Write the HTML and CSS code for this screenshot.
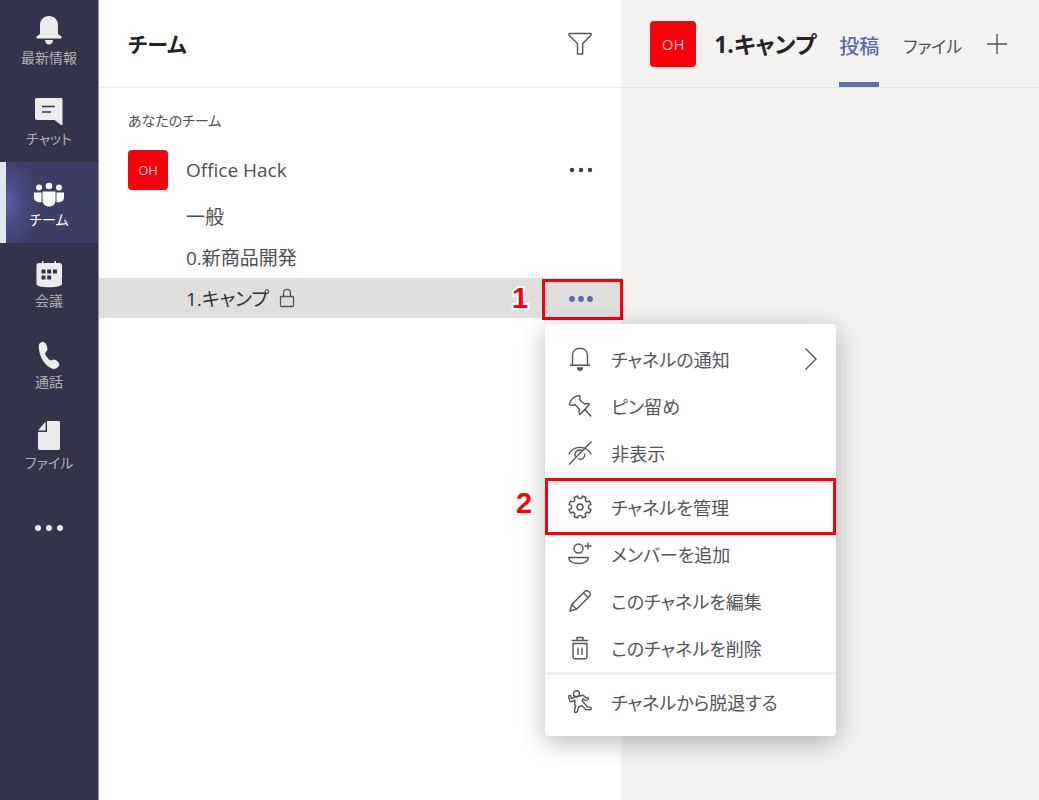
FILE: index.html
```html
<!DOCTYPE html>
<html lang="ja">
<head>
<meta charset="utf-8">
<meta name="viewport" content="width=device-width, initial-scale=1">
<title>チーム</title>
<link rel="stylesheet" href="styles.css">
</head>
<body>
<div class="app">
  <nav class="rail" aria-label="メイン">
    <a class="rail-item" href="#activity">
      <svg class="rail-icon" viewBox="0 0 30 30"><path d="M15 1c5.400 0 9 4 9 9v9l3.300 2.500c.8.700.4 2-.8 2H3.500c-1.200 0-1.600-1.300-.8-2L6 19v-9c0-5 3.600-9 9-9z"/><path d="M11 25h8c-.3 3-2 4.500-4 4.500S11.300 28 11 25z"/></svg>
      <span>最新情報</span>
    </a>
    <a class="rail-item" href="#chat">
      <svg class="rail-icon" viewBox="0 0 30 30"><path d="M3 2h24c1 0 1.500.6 1.500 1.500V28c0 1-1 1.300-1.700.8L20.500 24H3c-1 0-2-.8-2-2V4c0-1.200.8-2 2-2z"/><path class="rail-cut" d="M8 10.500h13M8 16h9"/></svg>
      <span>チャット</span>
    </a>
    <a class="rail-item rail-item-active" href="#teams" aria-current="page">
      <svg class="rail-icon" viewBox="0 -4 30 30"><circle cx="5" cy="6.500" r="3"/><circle cx="15" cy="5" r="3.300"/><circle cx="25" cy="6.500" r="3"/><path d="M8.500 10.500h13V19c0 4-2.500 6.500-6.500 6.500S8.500 23 8.500 19z"/><path d="M0 11.500h7.500v9.700C3 21.500 0 20 0 16.500zM30 11.500h-7.500v9.700c4.500.3 7.500-1.200 7.500-4.700z"/></svg>
      <span>チーム</span>
    </a>
    <a class="rail-item" href="#meetings">
      <svg class="rail-icon" viewBox="0 -2 30 30"><path d="M8 1h1.500v2h11V1H22v2h3.500C27 3 28 4 28 5.500V24c0 2-6 3.300-13 3.300S2.500 26 2.500 24V5.500C2.500 4 3.500 3 5 3h3z"/><path class="rail-hole" d="M7.500 9.500h4v4h-4zM13.200 9.500h4v4h-4zM19 9.500h4v4h-4zM7.500 15.500h4v4h-4zM13.200 15.500h4v4h-4z"/></svg>
      <span>会議</span>
    </a>
    <a class="rail-item" href="#calls">
      <svg class="rail-icon" viewBox="0 -2 30 30"><path d="M7 1.500c2.500-1 4.500-.2 5.500 2.500 1.500 4 1.300 5-.9 7.400-.8 1-.5 2 .5 3.500l2.500 3.200c1.100 1.300 2 1.500 3.200 1 3-1.200 4-.7 6.500 2.200 1.600 1.800 1 3.500-.6 5-1.900 1.900-4.200 2.200-6.500 1C10 23.500 5.500 16 4.700 6c-.1-2.500.7-3.900 2.300-4.500z"/></svg>
      <span>通話</span>
    </a>
    <a class="rail-item" href="#files">
      <svg class="rail-icon" viewBox="0 -1 30 30"><path d="M13 0h11.500c1 0 1.500.7 1.500 1.500v26c0 .9-.7 1.500-1.700 1.500H5.700c-1 0-1.700-.6-1.700-1.500V11h9z"/><path d="M11.500.8V9.500H4z"/></svg>
      <span>ファイル</span>
    </a>
    <button class="rail-more" type="button" aria-label="その他">
      <svg class="rail-icon" viewBox="0 0 30 30"><circle cx="4" cy="16" r="3"/><circle cx="15" cy="16" r="3"/><circle cx="26" cy="16" r="3"/></svg>
    </button>
  </nav>

  <section class="panel">
    <header class="panel-head">
      <h1 class="panel-title">チーム</h1>
      <button class="icon-button" type="button" aria-label="フィルター">
        <svg class="icon" viewBox="0 0 24 24"><path d="M1 1.500h22v1.800l-8.300 8.200V22H9.500V11.500L1 3.300z"/></svg>
      </button>
    </header>
    <h2 class="group-title">あなたのチーム</h2>
    <div class="team">
      <span class="avatar">OH</span>
      <a class="team-name" href="#office-hack">Office Hack</a>
      <button class="more" type="button" aria-label="チームのその他のオプション">
        <svg class="icon icon-solid" viewBox="0 0 24 24"><circle cx="3" cy="12" r="2.200"/><circle cx="12" cy="12" r="2.200"/><circle cx="21" cy="12" r="2.200"/></svg>
      </button>
    </div>
    <ul class="channels">
      <li class="channel"><a href="#general">一般</a></li>
      <li class="channel"><a href="#products">0.新商品開発</a></li>
      <li class="channel channel-active">
        <a href="#camp">1.キャンプ</a>
        <svg class="lock" viewBox="0 0 16 20"><path d="M2.500 8.500h11c.6 0 1 .4 1 1v8c0 .6-.4 1-1 1h-11c-.6 0-1-.4-1-1v-8c0-.6.4-1 1-1zM4.500 8.500V5c0-2.300 1.500-3.700 3.500-3.700s3.500 1.400 3.500 3.700v3.500"/></svg>
        <div class="channel-options">
          <button class="more more-active" type="button" aria-label="チャネルのその他のオプション" aria-expanded="true">
            <svg class="icon icon-solid" viewBox="0 0 24 24"><circle cx="3" cy="13" r="2.900"/><circle cx="12" cy="13" r="2.900"/><circle cx="21" cy="13" r="2.900"/></svg>
          </button>
          <span class="step">1</span>
          <div class="menu" role="menu">
            <button class="menu-item" type="button" role="menuitem">
              <svg class="icon" viewBox="0 0 24 24"><path d="M2 18h2.500V8.500C4.500 4 7.500 1.200 12 1.200s7.500 2.800 7.500 7.300V18H22M2 18.300h20"/><path class="icon-fill" d="M9.500 21h5c-.3 1.700-1.200 2.300-2.500 2.300S9.800 22.700 9.500 21z"/></svg>
              <span>チャネルの通知</span>
              <svg class="chevron" viewBox="0 0 14 24"><path d="M1.500 1.500L12 12 1.500 22.500"/></svg>
            </button>
            <button class="menu-item" type="button" role="menuitem">
              <svg class="icon" viewBox="0 0 24 24"><path d="M11.500 1.500c1.200 1 .6 2.600 0 4.200l5 4.300c1.700-.8 3.300-.5 5 .2l-9.500 10.300c-1.200-1.500-1.300-3.300-.7-5.200L7 10.500c-1.900.9-3.900 1.200-5.700.2C1.800 6 6 1.800 11.500 1.500zM16.800 15.300l6.200 7.200"/></svg>
              <span>ピン留め</span>
            </button>
            <button class="menu-item" type="button" role="menuitem">
              <svg class="icon" viewBox="0 0 24 24"><path d="M.8 13.500C5 4 19 4 23.200 13.500M7.500 15.500A4.500 4.500 0 0 1 14 9.800M16.500 12.500a4.500 4.500 0 0 1-6.500 5.200M1 23.500L23.500.5"/></svg>
              <span>非表示</span>
            </button>
            <hr class="menu-divider">
            <button class="menu-item menu-item-marked" type="button" role="menuitem">
              <svg class="icon" viewBox="0 0 24 24"><path d="M9.600 1C10 4.500 14 4.500 14.400 1L18 2.500C16 5.500 18.700 8 21.500 6L23 9.600C19.500 10 19.500 14 23 14.400L21.500 18C18.500 16 16 18.700 18 21.500L14.400 23C14 19.500 10 19.500 9.600 23L6 21.500C8 18.700 5.500 16 2.500 18L1 14.400C4.500 14 4.500 10 1 9.600L2.500 6C5.500 8 8 5.500 6 2.500z"/><circle cx="12" cy="12" r="3"/></svg>
              <span>チャネルを管理</span>
              <span class="step">2</span>
            </button>
            <button class="menu-item" type="button" role="menuitem">
              <svg class="icon" viewBox="0 0 24 24"><circle cx="10.500" cy="6.500" r="4.500"/><path d="M1 15.500h19c.3 4-3.500 6-9.500 6S.7 19.500 1 15.500zM20 .5v7M16.500 4h7"/></svg>
              <span>メンバーを追加</span>
            </button>
            <button class="menu-item" type="button" role="menuitem">
              <svg class="icon" viewBox="0 0 24 24"><path d="M2 22l1.800-6.500L16.500 2.800c2.700-3.200 7.700 1.300 4.700 4.700L8.500 20.200zM15.500 4l4.600 4.600M3.800 15.500l4.700 4.700"/></svg>
              <span>このチャネルを編集</span>
            </button>
            <button class="menu-item" type="button" role="menuitem">
              <svg class="icon" viewBox="0 0 24 24"><path d="M4 4.500h16M9 4V1.500h6V4M5 7.500h14v13c0 1.400-1 2.200-2.500 2.200h-9C6 22.700 5 21.900 5 20.500zM10 11.500v7.500M14 11.500v7.500"/></svg>
              <span>このチャネルを削除</span>
            </button>
            <hr class="menu-divider">
            <button class="menu-item" type="button" role="menuitem">
              <svg class="icon" viewBox="0 0 24 24"><circle cx="8.500" cy="3.800" r="3"/><path d="M6.800 7L3.400 8.600 2.900 6.300C2.400 4.800.4 5.300.8 6.900l1 3.800c.3 1 1.300 1.300 2.200.8l3-1.400-.3 4.400 1 .9-1.200 5.300c-.3 1.900 2 2.500 2.700.9l1.500-4.600 3-1.400 4.600 4.200h3.500c2 0 2-2.700 0-2.700h-2.300l-5.300-6.300 1-2.200 1.600 1.800 2.700-.5c1.700-.4 1.300-2.600-.4-2.300l-1.300.2-2.600-2.500L11.500 6z"/></svg>
              <span>チャネルから脱退する</span>
            </button>
          </div>
        </div>
      </li>
    </ul>
  </section>

  <main class="main">
    <header class="main-head">
      <span class="avatar avatar-large">OH</span>
      <h2 class="main-title">1.キャンプ</h2>
      <nav class="tabs" aria-label="タブ">
        <a class="tab tab-active" href="#posts" aria-current="page">投稿</a>
        <a class="tab" href="#channel-files">ファイル</a>
      </nav>
      <button class="icon-button" type="button" aria-label="タブを追加">
        <svg class="icon" viewBox="0 0 24 24"><path d="M12 2v20M2 12h20"/></svg>
      </button>
    </header>
  </main>
</div>
</body>
</html>
```

FILE: styles.css
```css
* {
  box-sizing: border-box;
}

body {
  margin: 0;
  color: #504e50;
  font-family: "Open Sans", "Noto Sans CJK JP", sans-serif;
  font-size: 19px;
  font-feature-settings: "palt";
}

h1, h2, ul, hr {
  margin: 0;
  padding: 0;
}

a {
  color: inherit;
  text-decoration: none;
}

button {
  margin: 0;
  padding: 0;
  border: 0;
  background: none;
  color: inherit;
  font: inherit;
  font-feature-settings: inherit;
  cursor: pointer;
}

svg {
  display: block;
  flex: none;
}

.app {
  display: grid;
  grid-template-columns: 99px 5fr 4fr;
  min-height: 100vh;
}

/* Left rail */
.rail {
  display: flex;
  flex-direction: column;
  border-right: 1px solid #929199;
  background: #33344a;
  color: #b3b0b4;
  font-size: 14px;
  line-height: 20px;
}

.rail-item {
  display: flex;
  flex-direction: column;
  align-items: center;
  gap: 3px;
  height: 81px;
  padding-top: 15px;
}

.rail-item-active {
  border-left: 6px solid #dde8ee;
  padding-right: 6px;
  background: radial-gradient(ellipse 34px 50px at 0 50%, #5860a0, #464a80 50%, #3d3e66);
  color: #fff;
}

.rail-icon {
  width: 30px;
  height: 30px;
  fill: #ebebeb;
}

.rail-item-active .rail-icon {
  fill: #fff;
}

.rail-cut {
  fill: none;
  stroke: #33344a;
  stroke-width: 1.5;
}

.rail-hole {
  fill: #33344a;
}

.rail-more {
  display: grid;
  place-items: center;
  height: 81px;
}

/* Team list */
.panel {
  background: #fff;
}

.panel-head {
  display: flex;
  align-items: center;
  justify-content: space-between;
  height: 88px;
  padding: 0 29px;
  border-bottom: 1px solid #ededed;
}

.panel-title {
  color: #252423;
  font-size: 21px;
  line-height: 32px;
}

.icon {
  width: 24px;
  height: 24px;
  fill: none;
  stroke: #56545a;
  stroke-width: 1.4;
  stroke-linejoin: round;
}

.icon-solid {
  fill: #3b3a48;
  stroke: none;
}

.icon-fill {
  fill: #56545a;
}

.group-title {
  padding: 20px 29px 16px;
  font-size: 14px;
  font-weight: 400;
  line-height: 26px;
}

.team {
  display: flex;
  align-items: center;
  height: 40px;
  padding-left: 29px;
}

.avatar {
  display: grid;
  flex: none;
  place-items: center;
  width: 40px;
  height: 40px;
  border-radius: 4px;
  background: #f8000c;
  color: #fbc9c4;
  font-size: 13px;
}

.team-name {
  flex: 1;
  margin-left: 18px;
}

.more {
  display: grid;
  place-items: center;
  width: 80px;
  height: 40px;
}

.more-active .icon {
  fill: #5b69ad;
}

.channels {
  padding-top: 6px;
  list-style: none;
}

.channel {
  display: flex;
  align-items: center;
  height: 40px;
  margin-bottom: 1px;
  padding-left: 87px;
}

.channel-active {
  background: #e0dfdd;
  color: #302f3c;
}

.lock {
  width: 16px;
  height: 20px;
  margin-left: 10px;
  fill: none;
  stroke: #56545a;
  stroke-width: 1.3;
}

.channel-options {
  position: relative;
  margin-left: auto;
}

/* Numbered callouts */
.channel-options::after,
.menu-item-marked::after {
  content: "";
  position: absolute;
  border: 3px solid #f8000c;
  pointer-events: none;
}

.channel-options::after {
  inset: 1px -2px -2px 1px;
}

.menu-item-marked::after {
  inset: -5px 0;
}

.step {
  position: absolute;
  top: 0;
  right: calc(100% + 13px);
  color: #f8000c;
  font: bold 29px/40px "Liberation Sans", sans-serif;
  -webkit-text-stroke: 4px #fff;
  paint-order: stroke fill;
}

/* Channel menu */
.menu {
  position: absolute;
  z-index: 1;
  top: 46px;
  left: 4px;
  width: 291px;
  padding: 11px 0;
  border-radius: 4px;
  background: #fff;
  box-shadow: 0 6px 26px rgba(0, 0, 0, .28);
  color: #56545a;
  font-size: 18px;
}

.menu-item {
  position: relative;
  display: flex;
  align-items: center;
  gap: 19px;
  width: 100%;
  height: 47px;
  padding: 0 18px 0 23px;
  white-space: nowrap;
}

.menu-divider {
  height: 3px;
  margin: 1px 0 3px;
  border: 0;
  background: #f0f0f0;
}

.chevron {
  width: 14px;
  height: 24px;
  margin-left: auto;
  fill: none;
  stroke: #56545a;
  stroke-width: 1.4;
}

/* Channel header */
.main {
  background: #f3f2f1;
}

.main-head {
  display: flex;
  align-items: center;
  height: 88px;
  padding-left: 29px;
  border-bottom: 1px solid #e4e4e4;
}

.avatar-large {
  width: 46px;
  height: 46px;
  font-size: 15px;
}

.main-title {
  margin-left: 18px;
  color: #252423;
  font-size: 23px;
  line-height: 36px;
}

.tabs {
  display: flex;
  align-self: stretch;
  gap: 24px;
  margin: 0 23px;
}

.tab {
  display: flex;
  align-items: center;
  padding-top: 8px;
  border-bottom: 5px solid transparent;
  font-size: 17px;
}

.tab-active {
  border-color: #606dab;
  color: #5b69ad;
  font-size: 20px;
  font-weight: 500;
}
```
